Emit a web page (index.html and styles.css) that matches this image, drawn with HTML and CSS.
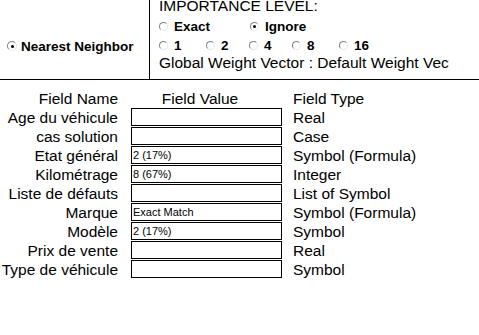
FILE: index.html
```html
<!DOCTYPE html>
<html>
<head>
<meta charset="utf-8">
<link rel="stylesheet" href="styles.css">
</head>
<body>
<div class="top">
  <div class="algo">
    <label class="opt big"><span class="radio on"></span>Nearest Neighbor</label>
  </div>
  <div class="importance">
    <div class="title">IMPORTANCE LEVEL:</div>
    <div class="row1">
      <label class="opt"><span class="radio"></span>Exact</label>
      <label class="opt"><span class="radio on"></span>Ignore</label>
    </div>
    <div class="row2">
      <label class="opt"><span class="radio"></span>1</label>
      <label class="opt"><span class="radio"></span>2</label>
      <label class="opt"><span class="radio"></span>4</label>
      <label class="opt"><span class="radio"></span>8</label>
      <label class="opt"><span class="radio"></span>16</label>
    </div>
    <div class="global">Global Weight Vector : Default Weight Vector</div>
  </div>
</div>
<div class="fields">
  <div class="name">Field Name</div><div class="head-val">Field Value</div><div class="type">Field Type</div>
  <div class="name">Age du véhicule</div><div class="box"></div><div class="type">Real</div>
  <div class="name">cas solution</div><div class="box"></div><div class="type">Case</div>
  <div class="name">Etat général</div><div class="box">2 (17%)</div><div class="type">Symbol (Formula)</div>
  <div class="name">Kilométrage</div><div class="box">8 (67%)</div><div class="type">Integer</div>
  <div class="name">Liste de défauts</div><div class="box"></div><div class="type">List of Symbol</div>
  <div class="name">Marque</div><div class="box">Exact Match</div><div class="type">Symbol (Formula)</div>
  <div class="name">Modèle</div><div class="box">2 (17%)</div><div class="type">Symbol</div>
  <div class="name">Prix de vente</div><div class="box"></div><div class="type">Real</div>
  <div class="name">Type de véhicule</div><div class="box"></div><div class="type">Symbol</div>
</div>
</body>
</html>
```
FILE: styles.css
```css
html, body {
  margin: 0;
  padding: 0;
  background: #ffffff;
  color: #000000;
  font-family: "Liberation Sans", Arial, sans-serif;
  font-size: 15.5px;
  overflow: hidden;
}

.top {
  display: flex;
  height: 79px;
  border-bottom: 1px solid #000;
}

.algo {
  width: 150px;
  border-right: 1px solid #000;
  padding: 37px 0 0 7px;
  box-sizing: border-box;
  flex: none;
}

.opt {
  display: flex;
  align-items: center;
  font-weight: bold;
  font-size: 13.5px;
  height: 18px;
  white-space: nowrap;
}

.radio {
  width: 9px;
  height: 9px;
  box-sizing: border-box;
  border-radius: 50%;
  border: 1px solid;
  border-color: #808080 #e8e8e8 #e8e8e8 #808080;
  background: #fff;
  margin-right: 6px;
  flex: none;
  display: flex;
  align-items: center;
  justify-content: center;
}

.radio.on::after {
  content: "";
  width: 3px;
  height: 3px;
  background: #000;
  border-radius: 50%;
}

.big .radio {
  margin-right: 4px;
  width: 10px;
  height: 10px;
}

.importance {
  padding-left: 9px;
  overflow: hidden;
  width: 290px;
  white-space: nowrap;
}

.title {
  line-height: 19px;
  margin-top: -4px;
}

.row1 {
  display: grid;
  grid-template-columns: 91px auto;
  margin-top: 2px;
  height: 19px;
  align-items: center;
}

.row2 {
  display: grid;
  grid-template-columns: 47px 43px 43px 47px auto;
  height: 18px;
  align-items: center;
}

.global {
  line-height: 18px;
}

.fields {
  display: grid;
  grid-template-columns: 118px 151px auto;
  column-gap: 0;
  margin-top: 9px;
  grid-auto-rows: 19px;
  align-items: center;
}

.name {
  text-align: right;
  white-space: nowrap;
}

.head-val {
  margin-left: 13px;
  text-align: center;
}

.box {
  margin-left: 13px;
  width: 151px;
  height: 18px;
  box-sizing: border-box;
  border: 1px solid #000;
  background: #fff;
  font-size: 11px;
  line-height: 16px;
  padding-left: 1px;
  white-space: nowrap;
  align-self: start;
}

.type {
  margin-left: 24px;
  white-space: nowrap;
}
```
